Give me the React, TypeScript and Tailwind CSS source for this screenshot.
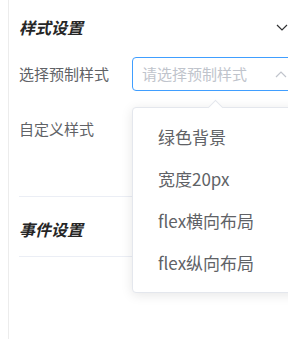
const font = { fontFamily: '"Noto Sans CJK SC", "Noto Sans", sans-serif' }

const presets = ["绿色背景", "宽度20px", "flex横向布局", "flex纵向布局"]

function Arrow({ up, color }: { up?: boolean; color: string }) {
  return (
    <svg width="12" height="7" viewBox="0 0 12 7" fill="none">
      <polyline points={up ? "1,6 6,1 11,6" : "1,1 6,6 11,1"} stroke={color} strokeWidth="1.2" />
    </svg>
  )
}

export default function App() {
  return (
    <div className="relative w-[288px] h-[339px] overflow-hidden bg-white" style={font}>
      <div className="ml-[8px] h-full border-l border-[#ececec] pl-[10px] w-[320px]">
        {/* 样式设置 */}
        <div className="h-[54px] flex items-center w-[270px] justify-between pr-[1px]">
          <span className="text-[16px] font-bold italic text-[#262626]">样式设置</span>
          <Arrow color="#303133" />
        </div>
        <div className="mt-[3px] flex items-center h-[34px]">
          <span className="w-[113px] shrink-0 text-[15px] text-[#606266]">选择预制样式</span>
          <div className="w-[190px] shrink-0 h-[34px] rounded-[4px] border border-[#409eff] flex items-center pl-[9px] pr-[34px] justify-between">
            <span className="text-[15px] text-[#c0c4cc]">请选择预制样式</span>
            <Arrow up color="#c0c4cc" />
          </div>
        </div>
        <div className="mt-[27px] h-[22px] flex items-center">
          <span className="text-[15px] text-[#606266]">自定义样式</span>
        </div>
        <div className="h-[57px] border-b border-[#ebeef5]" />
        {/* 事件设置 */}
        <div className="h-[60px] flex items-center pt-[4px] border-b border-[#ebeef5]">
          <span className="text-[16px] font-bold italic text-[#262626]">事件设置</span>
        </div>
      </div>

      {/* 下拉面板 */}
      <div className="absolute left-[132px] top-[107px] w-[190px] rounded-[4px] border border-[#e4e7ed] bg-white shadow-[0_2px_12px_rgba(0,0,0,0.1)] py-[8px]">
        <div className="absolute left-[77px] top-[-6px] w-[11px] h-[11px] rotate-45 bg-white border-l border-t border-[#e4e7ed]" />
        {presets.map((p) => (
          <div key={p} className="h-[42px] flex items-center pl-[25px] text-[17px] text-[#606266]">
            {p}
          </div>
        ))}
      </div>
    </div>
  )
}
